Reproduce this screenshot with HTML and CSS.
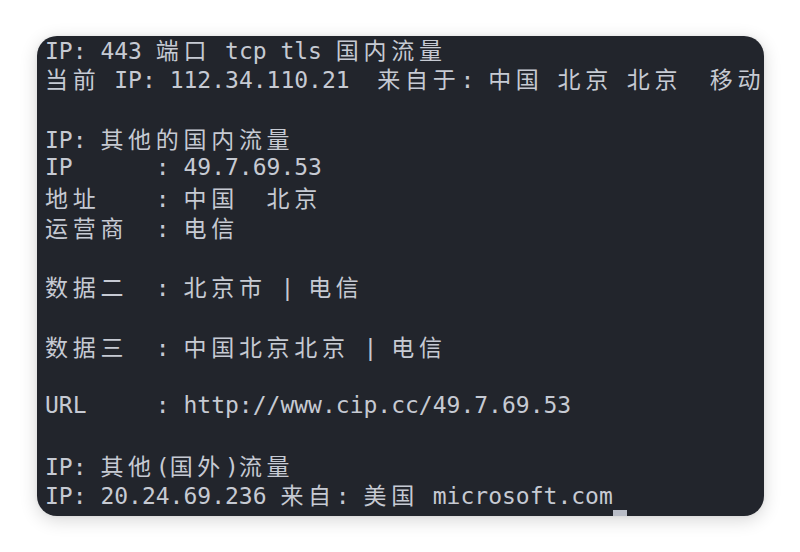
FILE: index.html
```html
<!DOCTYPE html>
<html lang="zh-CN">
<head>
<meta charset="utf-8">
<title>终端输出</title>
<link rel="stylesheet" href="styles.css">
</head>
<body>
<div class="term">
  <div class="screen">
    <div class="ln">IP: 443 <span class="cj">端口</span> tcp tls <span class="cj">国内流量</span></div>
    <div class="ln"><span class="cj">当前</span> IP: 112.34.110.21  <span class="cj">来自于</span>: <span class="cj">中国</span> <span class="cj">北京</span> <span class="cj">北京</span>  <span class="cj">移动</span></div>
    <div class="ln"></div>
    <div class="ln">IP: <span class="cj">其他的国内流量</span></div>
    <div class="ln">IP      : 49.7.69.53</div>
    <div class="ln"><span class="cj">地址</span>    : <span class="cj">中国</span>  <span class="cj">北京</span></div>
    <div class="ln"><span class="cj">运营商</span>  : <span class="cj">电信</span></div>
    <div class="ln"></div>
    <div class="ln"><span class="cj">数据二</span>  : <span class="cj">北京市</span> | <span class="cj">电信</span></div>
    <div class="ln"></div>
    <div class="ln"><span class="cj">数据三</span>  : <span class="cj">中国北京北京</span> | <span class="cj">电信</span></div>
    <div class="ln"></div>
    <div class="ln">URL     : http://www.cip.cc/49.7.69.53</div>
    <div class="ln"></div>
    <div class="ln">IP: <span class="cj">其他</span>(<span class="cj">国外</span>)<span class="cj">流量</span></div>
    <div class="ln">IP: 20.24.69.236 <span class="cj">来自</span>: <span class="cj">美国</span> microsoft.com</div>
    <div class="ln">                                         <span class="cursor"> </span></div>
  </div>
</div>
</body>
</html>
```

FILE: styles.css
```css
html, body {
  margin: 0;
  padding: 0;
  background: #ffffff;
}

body {
  padding: 36px 36px 0 37px;
  height: 552px;
  box-sizing: border-box;
}

.term {
  width: 727px;
  height: 480px;
  background: #22252c;
  border-radius: 20px;
  overflow: hidden;
  box-shadow: 0 4px 18px rgba(0, 0, 0, 0.16), 0 0 4px rgba(0, 0, 0, 0.06);
}

.screen {
  margin-top: -1.4px;
  padding-left: 8px;
  font-family: "DejaVu Sans Mono", "Noto Sans CJK SC", monospace;
  font-size: 23px;
  color: #c6cad3;
}

.ln {
  height: 29.73px;
  line-height: 29.73px;
  white-space: pre;
}

.cj {
  font-family: "Noto Sans CJK SC", "DejaVu Sans Mono", sans-serif;
  letter-spacing: 4.7px;
}

.cursor {
  display: inline-block;
  width: 13.85px;
  height: 29.73px;
  vertical-align: top;
  background: #b9bdc7;
}
```
